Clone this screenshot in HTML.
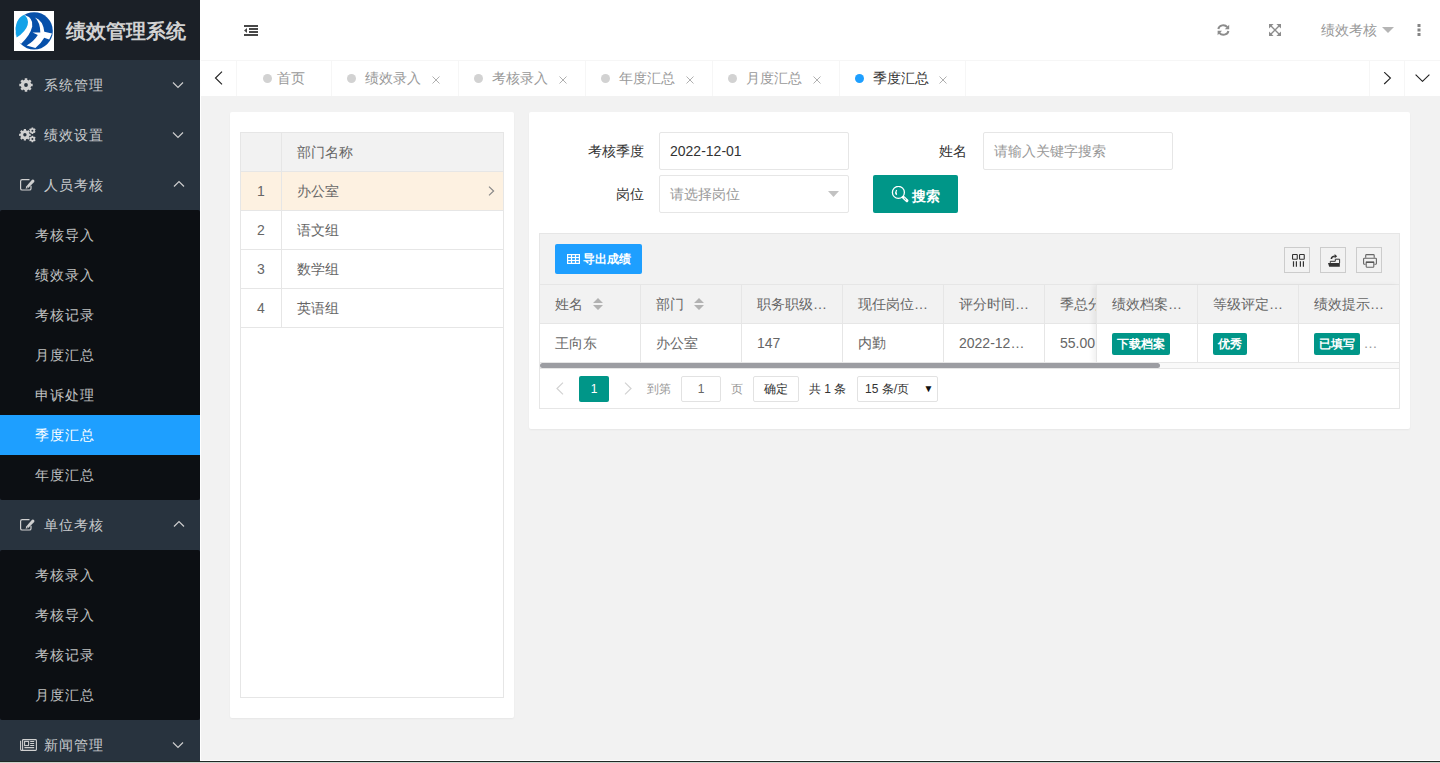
<!DOCTYPE html>
<html><head><meta charset="utf-8">
<style>
*{margin:0;padding:0;box-sizing:border-box}
html,body{width:1440px;height:763px;overflow:hidden;background:#f2f2f2;font-family:"Liberation Sans",sans-serif;font-size:14px;color:#666}
.abs{position:absolute}
#side{position:absolute;left:0;top:0;width:200px;height:763px;background:#28333e;overflow:hidden}
#logo{position:absolute;left:0;top:0;width:200px;height:60px;background:#1b2027}
#logo .title{position:absolute;left:66px;top:17px;font-size:20px;font-weight:bold;color:#d2d2d2;line-height:28px;white-space:nowrap}
.nav{position:absolute;left:0;width:200px;height:50px;color:rgba(255,255,255,.75);line-height:50px}
.nav .t{position:absolute;left:44px;top:0;letter-spacing:1px}
.nav svg.ic{position:absolute;left:20px;top:18px}
.nav svg.ar{position:absolute;left:172px;top:21px}
.child{position:absolute;left:0;width:200px;background:#0c0f13;border-radius:2px}
.ci{position:absolute;left:0;width:200px;height:40px;line-height:40px;color:rgba(255,255,255,.75)}
.ci span{position:absolute;left:35px;letter-spacing:1px}
.ci.on{background:#1e9fff;color:#fff}
#header{position:absolute;left:200px;top:0;width:1240px;height:60px;background:#fff}
#tabs{position:absolute;left:200px;top:60px;width:1240px;height:36px;background:#fff;border-top:1px solid #f6f6f6}
.tab{position:absolute;top:0;height:35px;border-right:1px solid #f6f6f6;color:#999;line-height:35px;white-space:nowrap}
.tab .dot{position:absolute;top:13px;width:9px;height:9px;border-radius:50%;background:#d2d2d2}
.tab .tx{position:absolute;top:0}
.tab .x{position:absolute;top:11px}
.card{position:absolute;background:#fff;border-radius:2px;box-shadow:0 1px 2px 0 rgba(0,0,0,.05)}
.bd{border:1px solid #e6e6e6}
.lt{color:#666;white-space:nowrap}
.inp{border:1px solid #e6e6e6;border-radius:2px;background:#fff;line-height:36px;padding-left:10px;white-space:nowrap}
.tb{width:26px;height:26px;border:1px solid #ccc}
.hd{position:absolute;top:50px;line-height:39px;white-space:nowrap;color:#666}
.cl{position:absolute;top:89px;line-height:38px;white-space:nowrap;color:#666}
.vl{position:absolute;width:1px;background:#e6e6e6}
.btn{position:absolute;height:22px;line-height:22px;background:#009688;color:#fff;font-size:12px;padding:0 5px;border-radius:2px;font-weight:bold;white-space:nowrap}
</style></head><body>
<div id="side">
  <div id="logo">
    <svg class="abs" style="left:14px;top:11px" width="40" height="40" viewBox="0 0 40 40">
      <rect width="40" height="40" fill="#fff"/>
      <circle cx="20.1" cy="19.9" r="18.7" fill="#0650aa"/>
      <path d="M9.6 3.6 Q19.8 7 18.2 15.5 Q16.6 23.5 7.2 32.8 L2.5 30 L1 20 L4 8 Z" fill="#fff"/>
      <path d="M10.2 3.8 Q15.3 8 13.6 14 Q11.8 20.5 2.6 26.6 Q0.6 18 3 11 Q5.4 5.6 10.2 3.8 Z" fill="#12a2e8"/>
      <path d="M21 6.6 Q29 9.5 30.3 20.8 L38 22.6 L35.2 28.4 L30.2 26.8 Q26.8 33 21.4 36.9 L12.6 34.6 Q20.2 30 23.8 24 L18.6 21.4 L26.3 21.4 Q26.2 11.5 21 6.6 Z" fill="#fff"/>
    </svg>
    <div class="title">绩效管理系统</div>
  </div>

  <div class="nav" style="top:60px"><svg class="abs" style="left:0;top:0" width="40" height="50" viewBox="0 0 40 50"><path fill-rule="evenodd" fill="#d0d0d0" d="M24.76 19.85 L24.73 18.32 L27.27 18.32 L27.24 19.85 L28.77 20.48 L29.82 19.38 L31.62 21.18 L30.52 22.23 L31.15 23.76 L32.68 23.73 L32.68 26.27 L31.15 26.24 L30.52 27.77 L31.62 28.82 L29.82 30.62 L28.77 29.52 L27.24 30.15 L27.27 31.68 L24.73 31.68 L24.76 30.15 L23.23 29.52 L22.18 30.62 L20.38 28.82 L21.48 27.77 L20.85 26.24 L19.32 26.27 L19.32 23.73 L20.85 23.76 L21.48 22.23 L20.38 21.18 L22.18 19.38 L23.23 20.48 Z M27.90 25.00 A1.9 1.9 0 1 0 24.10 25.00 A1.9 1.9 0 1 0 27.90 25.00 Z"/></svg><span class="t">系统管理</span><svg class="ar" width="12" height="8" viewBox="0 0 12 8"><path d="M1 1.5 L6 6.5 L11 1.5" fill="none" stroke="#cdcdcd" stroke-width="1.2"/></svg></div>
  <div class="nav" style="top:110px"><svg class="abs" style="left:0;top:0" width="40" height="50" viewBox="0 0 40 50"><g fill-rule="evenodd" fill="#d0d0d0"><path d="M23.83 20.33 L23.79 19.00 L26.01 19.00 L25.97 20.33 L27.30 20.88 L28.22 19.92 L29.78 21.48 L28.82 22.40 L29.37 23.73 L30.70 23.69 L30.70 25.91 L29.37 25.87 L28.82 27.20 L29.78 28.12 L28.22 29.68 L27.30 28.72 L25.97 29.27 L26.01 30.60 L23.79 30.60 L23.83 29.27 L22.50 28.72 L21.58 29.68 L20.02 28.12 L20.98 27.20 L20.43 25.87 L19.10 25.91 L19.10 23.69 L20.43 23.73 L20.98 22.40 L20.02 21.48 L21.58 19.92 L22.50 20.88 Z M26.60 24.80 A1.7 1.7 0 1 0 23.20 24.80 A1.7 1.7 0 1 0 26.60 24.80 Z"/><path d="M31.60 18.23 L31.55 17.41 L33.25 17.41 L33.20 18.23 L34.14 18.77 L34.83 18.32 L35.67 19.79 L34.94 20.16 L34.94 21.24 L35.67 21.61 L34.83 23.08 L34.14 22.63 L33.20 23.17 L33.25 23.99 L31.55 23.99 L31.60 23.17 L30.66 22.63 L29.97 23.08 L29.13 21.61 L29.86 21.24 L29.86 20.16 L29.13 19.79 L29.97 18.32 L30.66 18.77 Z M33.40 20.70 A1.0 1.0 0 1 0 31.40 20.70 A1.0 1.0 0 1 0 33.40 20.70 Z"/><path d="M31.60 26.53 L31.55 25.71 L33.25 25.71 L33.20 26.53 L34.14 27.07 L34.83 26.62 L35.67 28.09 L34.94 28.46 L34.94 29.54 L35.67 29.91 L34.83 31.38 L34.14 30.93 L33.20 31.47 L33.25 32.29 L31.55 32.29 L31.60 31.47 L30.66 30.93 L29.97 31.38 L29.13 29.91 L29.86 29.54 L29.86 28.46 L29.13 28.09 L29.97 26.62 L30.66 27.07 Z M33.40 29.00 A1.0 1.0 0 1 0 31.40 29.00 A1.0 1.0 0 1 0 33.40 29.00 Z"/></g></svg><span class="t">绩效设置</span><svg class="ar" width="12" height="8" viewBox="0 0 12 8"><path d="M1 1.5 L6 6.5 L11 1.5" fill="none" stroke="#cdcdcd" stroke-width="1.2"/></svg></div>
  <div class="nav" style="top:160px"><svg class="abs" style="left:19px;top:18px" width="17" height="14" viewBox="0 0 17 14"><path d="M10.5 1.6 H3.2 Q1.6 1.6 1.6 3.2 V10.4 Q1.6 12 3.2 12 H10.4 Q12 12 12 10.4 V7.8" fill="none" stroke="#d0d0d0" stroke-width="1.2"/><path d="M13 1.8 Q14.2 1.2 15 2 Q15.8 2.8 15.2 4 L9.2 10 L6.6 10.8 L7.4 8.2 Z" fill="#d0d0d0"/><path d="M8.3 8.6 L8 9.8 L9.1 9.4 Z" fill="#28333e"/></svg><span class="t">人员考核</span><svg class="ar" style="left:173px;top:20px" width="12" height="8" viewBox="0 0 12 8"><path d="M1 6.5 L6 1.5 L11 6.5" fill="none" stroke="#cdcdcd" stroke-width="1.2"/></svg></div>
  <div class="child" style="top:210px;height:290px">
    <div class="ci" style="top:5px"><span>考核导入</span></div>
    <div class="ci" style="top:45px"><span>绩效录入</span></div>
    <div class="ci" style="top:85px"><span>考核记录</span></div>
    <div class="ci" style="top:125px"><span>月度汇总</span></div>
    <div class="ci" style="top:165px"><span>申诉处理</span></div>
    <div class="ci on" style="top:205px"><span>季度汇总</span></div>
    <div class="ci" style="top:245px"><span>年度汇总</span></div>
  </div>
  <div class="nav" style="top:500px"><svg class="abs" style="left:19px;top:18px" width="17" height="14" viewBox="0 0 17 14"><path d="M10.5 1.6 H3.2 Q1.6 1.6 1.6 3.2 V10.4 Q1.6 12 3.2 12 H10.4 Q12 12 12 10.4 V7.8" fill="none" stroke="#d0d0d0" stroke-width="1.2"/><path d="M13 1.8 Q14.2 1.2 15 2 Q15.8 2.8 15.2 4 L9.2 10 L6.6 10.8 L7.4 8.2 Z" fill="#d0d0d0"/><path d="M8.3 8.6 L8 9.8 L9.1 9.4 Z" fill="#28333e"/></svg><span class="t">单位考核</span><svg class="ar" style="left:173px;top:20px" width="12" height="8" viewBox="0 0 12 8"><path d="M1 6.5 L6 1.5 L11 6.5" fill="none" stroke="#cdcdcd" stroke-width="1.2"/></svg></div>
  <div class="child" style="top:550px;height:170px">
    <div class="ci" style="top:5px"><span>考核录入</span></div>
    <div class="ci" style="top:45px"><span>考核导入</span></div>
    <div class="ci" style="top:85px"><span>考核记录</span></div>
    <div class="ci" style="top:125px"><span>月度汇总</span></div>
  </div>
  <div class="nav" style="top:720px"><svg class="abs" style="left:19px;top:18px" width="19" height="14" viewBox="0 0 19 14"><g fill="none" stroke="#d0d0d0" stroke-width="1.1"><path d="M3.6 1.6 H16.6 Q17.4 1.6 17.4 2.4 V11.6 Q17.4 12.4 16.6 12.4 H2.4 Q1.6 12.4 1.6 11.6 V2.8"/><path d="M3.6 1.6 V12.4"/><rect x="5.6" y="3.4" width="4" height="4.2"/><path d="M11.2 3.5 H15.2 M11.2 5.5 H15.2 M11.2 7.5 H15.2 M5.4 9.6 H15.2"/></g></svg><span class="t">新闻管理</span><svg class="ar" width="12" height="8" viewBox="0 0 12 8"><path d="M1 1.5 L6 6.5 L11 1.5" fill="none" stroke="#cdcdcd" stroke-width="1.2"/></svg></div>
</div>
<div id="header">
  <svg class="abs" style="left:44px;top:25px" width="15" height="11" viewBox="0 0 15 11"><g fill="#474747"><rect x="0" y="0" width="14" height="2"/><rect x="5" y="3" width="9" height="2"/><rect x="5" y="6" width="9" height="2"/><rect x="0" y="9" width="14" height="2"/><path d="M0 5.5 L3 3 L3 8 Z"/></g></svg>
  <svg class="abs" style="left:1016.5px;top:24px" width="13" height="12" viewBox="0 0 13 12"><g fill="none" stroke="#8c8c8c" stroke-width="2"><path d="M1.3 5 A5 4.6 0 0 1 10.3 3.2"/><path d="M11.4 7 A5 4.6 0 0 1 2.4 8.8"/></g><g fill="#8c8c8c"><path d="M12.2 0.8 V5.2 H7.8 Z"/><path d="M0.6 11.2 V6.8 H5 Z"/></g></svg>
  <svg class="abs" style="left:1069px;top:24px" width="12" height="12" viewBox="0 0 12 12"><g fill="#8c8c8c"><path d="M0 0 H4.6 L0 4.6 Z"/><path d="M12 0 H7.4 L12 4.6 Z"/><path d="M0 12 H4.6 L0 7.4 Z"/><path d="M12 12 H7.4 L12 7.4 Z"/></g><path d="M1.5 1.5 L10.5 10.5 M10.5 1.5 L1.5 10.5" stroke="#8c8c8c" stroke-width="1.4"/></svg>
  <div class="abs" style="left:1121px;top:20px;line-height:20px;color:#999;white-space:nowrap">绩效考核</div>
  <svg class="abs" style="left:1182px;top:27px" width="12" height="6" viewBox="0 0 12 6"><path d="M0 0 H12 L6 6 Z" fill="#b5b5b5"/></svg>
  <svg class="abs" style="left:1216.5px;top:24px" width="4" height="12" viewBox="0 0 4 12"><g fill="#858585"><rect x="0.5" y="0" width="3" height="3"/><rect x="0.5" y="4.5" width="3" height="3"/><rect x="0.5" y="9" width="3" height="3"/></g></svg>
</div>
<div id="tabs">
  <div class="abs" style="left:0;top:0;width:37px;height:35px;border-right:1px solid #f6f6f6"><svg class="abs" style="left:14px;top:10px" width="9" height="14" viewBox="0 0 9 14"><path d="M8 0.7 L1.5 7 L8 13.3" fill="none" stroke="#222" stroke-width="1.15"/></svg></div>
  <div class="tab" style="left:37px;width:95px"><i class="dot" style="left:26px"></i><span class="tx" style="left:40px">首页</span></div>
  <div class="tab" style="left:132px;width:127px"><i class="dot" style="left:15px;"></i><span class="tx" style="left:33px;">绩效录入</span><svg class="x" style="left:100px;top:15px" width="8" height="8" viewBox="0 0 8 8"><path d="M0.5 0.5 L7.5 7.5 M7.5 0.5 L0.5 7.5" stroke="#b0b0b0" stroke-width="1"/></svg></div>
  <div class="tab" style="left:259px;width:127px"><i class="dot" style="left:15px;"></i><span class="tx" style="left:33px;">考核录入</span><svg class="x" style="left:100px;top:15px" width="8" height="8" viewBox="0 0 8 8"><path d="M0.5 0.5 L7.5 7.5 M7.5 0.5 L0.5 7.5" stroke="#b0b0b0" stroke-width="1"/></svg></div>
  <div class="tab" style="left:386px;width:127px"><i class="dot" style="left:15px;"></i><span class="tx" style="left:33px;">年度汇总</span><svg class="x" style="left:100px;top:15px" width="8" height="8" viewBox="0 0 8 8"><path d="M0.5 0.5 L7.5 7.5 M7.5 0.5 L0.5 7.5" stroke="#b0b0b0" stroke-width="1"/></svg></div>
  <div class="tab" style="left:513px;width:127px"><i class="dot" style="left:15px;"></i><span class="tx" style="left:33px;">月度汇总</span><svg class="x" style="left:100px;top:15px" width="8" height="8" viewBox="0 0 8 8"><path d="M0.5 0.5 L7.5 7.5 M7.5 0.5 L0.5 7.5" stroke="#b0b0b0" stroke-width="1"/></svg></div>
  <div class="tab" style="left:640px;width:126px"><i class="dot" style="left:15px;background:#1e9fff"></i><span class="tx" style="left:33px;color:#333">季度汇总</span><svg class="x" style="left:99px;top:15px" width="8" height="8" viewBox="0 0 8 8"><path d="M0.5 0.5 L7.5 7.5 M7.5 0.5 L0.5 7.5" stroke="#b0b0b0" stroke-width="1"/></svg></div>
  <div class="abs" style="left:1169px;top:0;width:36px;height:35px;border-left:1px solid #f6f6f6"><svg class="abs" style="left:13px;top:11px" width="9" height="13" viewBox="0 0 9 13"><path d="M1.2 0.2 L7.4 6.1 L1.2 12" fill="none" stroke="#222" stroke-width="1.15"/></svg></div>
  <div class="abs" style="left:1204px;top:0;width:36px;height:35px;border-left:1px solid #f6f6f6"><svg class="abs" style="left:10px;top:13px" width="15" height="8" viewBox="0 0 15 8"><path d="M0.6 0.6 L7.5 7.3 L14.4 0.6" fill="none" stroke="#222" stroke-width="1.15"/></svg></div>
</div>

<!-- left card -->
<div class="card" style="left:230px;top:112px;width:284px;height:606px">
  <div class="abs" style="left:10px;top:20px;width:264px;height:566px;border:1px solid #e6e6e6;background:#fff">
    <div class="abs" style="left:0;top:0;width:262px;height:39px;background:#f2f2f2;border-bottom:1px solid #e6e6e6"></div>
    <div class="abs" style="left:40px;top:0;width:1px;height:195px;background:#e6e6e6"></div>
    <div class="abs lt" style="left:56px;top:0;line-height:38px">部门名称</div>
    <div class="abs" style="left:0;top:39px;width:262px;height:39px;background:#fdf1e1;border-bottom:1px solid #e6e6e6"></div>
    <div class="abs" style="left:40px;top:39px;width:1px;height:39px;background:#e6e6e6"></div>
    <div class="abs lt" style="left:56px;top:39px;line-height:38px">办公室</div>
    <div class="abs lt" style="left:16px;top:39px;line-height:38px">1</div>
    <svg class="abs" style="left:246.5px;top:53px" width="7" height="10" viewBox="0 0 7 10"><path d="M1 0.6 L5.6 5 L1 9.4" fill="none" stroke="#888" stroke-width="1.2"/></svg>
    <div class="abs" style="left:0;top:78px;width:262px;height:39px;border-bottom:1px solid #e6e6e6"></div>
    <div class="abs lt" style="left:56px;top:78px;line-height:38px">语文组</div>
    <div class="abs lt" style="left:16px;top:78px;line-height:38px">2</div>
    <div class="abs" style="left:0;top:117px;width:262px;height:39px;border-bottom:1px solid #e6e6e6"></div>
    <div class="abs lt" style="left:56px;top:117px;line-height:38px">数学组</div>
    <div class="abs lt" style="left:16px;top:117px;line-height:38px">3</div>
    <div class="abs" style="left:0;top:156px;width:262px;height:39px;border-bottom:1px solid #e6e6e6"></div>
    <div class="abs lt" style="left:56px;top:156px;line-height:38px">英语组</div>
    <div class="abs lt" style="left:16px;top:156px;line-height:38px">4</div>
  </div>
</div>

<!-- right card -->
<div class="card" style="left:529px;top:112px;width:881px;height:317px">
  <div class="abs" style="left:59px;top:20px;line-height:38px;color:#333">考核季度</div>
  <div class="abs inp" style="left:130px;top:20px;width:190px;height:38px;color:#333">2022-12-01</div>
  <div class="abs" style="left:87px;top:63px;line-height:38px;color:#333">岗位</div>
  <div class="abs inp" style="left:130px;top:63px;width:190px;height:38px;color:#999">请选择岗位</div>
  <svg class="abs" style="left:299px;top:79px" width="11" height="6" viewBox="0 0 11 6"><path d="M0 0 H11 L5.5 6 Z" fill="#c2c2c2"/></svg>
  <div class="abs" style="left:410px;top:20px;line-height:38px;color:#333">姓名</div>
  <div class="abs inp" style="left:454px;top:20px;width:190px;height:38px;color:#999">请输入关键字搜索</div>
  <div class="abs" style="left:344px;top:63px;width:85px;height:38px;background:#009688;border-radius:2px"></div>
  <svg class="abs" style="left:362px;top:74px" width="18" height="18" viewBox="0 0 18 18"><circle cx="7.4" cy="6.4" r="6" fill="none" stroke="#fff" stroke-width="1.3"/><path d="M12.4 11.3 L15.9 14.6" stroke="#fff" stroke-width="3" stroke-linecap="round"/><path d="M13.3 12.1 L15.1 13.8" stroke="#009688" stroke-width="0.8"/><path d="M5.6 4 Q4 6.4 5.6 8.9" fill="none" stroke="#fff" stroke-width="1.3"/></svg>
  <div class="abs" style="left:383px;top:74px;line-height:20px;color:#fff;font-weight:bold">搜索</div>

  <!-- table box -->
  <div class="abs" style="left:10px;top:121px;width:861px;height:176px;border:1px solid #e6e6e6;background:#fff;overflow:hidden">
    <div class="abs" style="left:0;top:0;width:859px;height:51px;background:#f2f2f2;border-bottom:1px solid #e6e6e6"></div>
    <div class="abs" style="left:15px;top:10px;width:87px;height:30px;background:#1e9fff;border-radius:2px"></div>
    <svg class="abs" style="left:26.5px;top:20px" width="13" height="10" viewBox="0 0 13 10"><g fill="none" stroke="#fff" stroke-width="1.2"><rect x="0.6" y="0.6" width="11.8" height="8.8"/><line x1="4.5" y1="0" x2="4.5" y2="10"/><line x1="8.5" y1="0" x2="8.5" y2="10"/><line x1="0" y1="3.5" x2="13" y2="3.5"/><line x1="0" y1="6.5" x2="13" y2="6.5"/></g></svg>
    <div class="abs" style="left:43px;top:18px;line-height:14px;font-size:12px;color:#fff;font-weight:bold">导出成绩</div>
    <div class="abs tb" style="left:744px;top:13px"><svg width="24" height="24" viewBox="0 0 24 24" style="position:absolute;left:0;top:0"><g fill="none" stroke="#333" stroke-width="1.1"><rect x="7.55" y="6.55" width="4.7" height="4.7" rx="0.5"/><rect x="14.55" y="6.55" width="4.7" height="4.7" rx="0.5"/><path d="M8.5 13.2 V18.8 M11.4 13.2 V18.8 M15.4 13.2 V18.8 M18.4 13.2 V18.8" stroke-width="1.2"/></g></svg></div>
    <div class="abs tb" style="left:780px;top:13px"><svg width="24" height="24" viewBox="0 0 24 24" style="position:absolute;left:0;top:0"><path d="M9.3 14.9 V13.3 H14.3 V11.2 H18.6 V15" fill="none" stroke="#333" stroke-width="1"/><path d="M7 15 H18.8 V18.8 H8.2 Z" fill="#333"/><path d="M10.3 11 Q10.5 8.4 13.8 8.2" fill="none" stroke="#333" stroke-width="1.5"/><path d="M13.6 6.1 L16.2 8.2 L13.6 10.3 Z" fill="#333"/></svg></div>
    <div class="abs tb" style="left:816px;top:13px"><svg width="24" height="24" viewBox="0 0 24 24" style="position:absolute;left:0;top:0"><g fill="none" stroke="#666" stroke-width="1.1"><path d="M8.7 9.8 V7.5 Q8.7 6.6 9.6 6.6 H16.3 Q17.2 6.6 17.2 7.5 V9.8"/><path d="M8.6 16.2 H7.4 Q6.6 16.2 6.6 15.4 V11 Q6.6 10.2 7.4 10.2 H18.6 Q19.4 10.2 19.4 11 V15.4 Q19.4 16.2 18.6 16.2 H17.4"/><path d="M9.2 14.4 H16.8 V18.4 Q16.8 19.3 15.9 19.3 H10.1 Q9.2 19.3 9.2 18.4 Z"/></g><path d="M9 14.2 H17" stroke="#555" stroke-width="1.4"/></svg></div>

    <!-- header row -->
<div class="abs" style="left:0;top:51px;width:859px;height:39px;background:#f2f2f2;border-bottom:1px solid #e6e6e6"></div>
<div class="abs" style="left:0;top:90px;width:859px;height:39px;background:#fff;border-bottom:1px solid #e6e6e6"></div>
<div class="vl" style="left:100px;top:51px;height:78px"></div>
<div class="vl" style="left:201px;top:51px;height:78px"></div>
<div class="vl" style="left:302px;top:51px;height:78px"></div>
<div class="vl" style="left:403px;top:51px;height:78px"></div>
<div class="vl" style="left:504px;top:51px;height:78px"></div>
<div class="hd" style="left:15px;top:51px;line-height:38px">姓名</div>
<div class="hd" style="left:116px;top:51px;line-height:38px">部门</div>
<div class="hd" style="left:217px;top:51px;line-height:38px">职务职级…</div>
<div class="hd" style="left:318px;top:51px;line-height:38px">现任岗位…</div>
<div class="hd" style="left:419px;top:51px;line-height:38px">评分时间…</div>
<div class="hd" style="left:520px;top:51px;line-height:38px">季总分</div>
<svg class="abs" style="left:53px;top:64px" width="10" height="12" viewBox="0 0 10 12"><path d="M0 5 L5 0 L10 5 Z M0 7 L5 12 L10 7 Z" fill="#b2b2b2"/></svg><svg class="abs" style="left:154px;top:64px" width="10" height="12" viewBox="0 0 10 12"><path d="M0 5 L5 0 L10 5 Z M0 7 L5 12 L10 7 Z" fill="#b2b2b2"/></svg><div class="cl" style="left:15px;top:90px;line-height:38px">王向东</div>
<div class="cl" style="left:116px;top:90px;line-height:38px">办公室</div>
<div class="cl" style="left:217px;top:90px;line-height:38px">147</div>
<div class="cl" style="left:318px;top:90px;line-height:38px">内勤</div>
<div class="cl" style="left:419px;top:90px;line-height:38px">2022-12…</div>
<div class="cl" style="left:520px;top:90px;line-height:38px">55.00</div>
<div class="abs" style="left:556px;top:51px;width:303px;height:78px;background:#fff;box-shadow:-3px 0 5px rgba(0,0,0,.06)"><div class="abs" style="left:0;top:0;width:303px;height:39px;background:#f2f2f2;border-bottom:1px solid #e6e6e6"></div><div class="abs" style="left:0;top:39px;width:303px;height:39px;background:#fff;border-bottom:1px solid #e6e6e6"></div><div class="vl" style="left:0px;top:0;height:78px"></div><div class="vl" style="left:101px;top:0;height:78px"></div><div class="vl" style="left:202px;top:0;height:78px"></div><div class="hd" style="left:16px;top:0;line-height:38px">绩效档案…</div><div class="hd" style="left:117px;top:0;line-height:38px">等级评定…</div><div class="hd" style="left:218px;top:0;line-height:38px">绩效提示…</div><div class="btn" style="left:16px;top:48px;width:58px;text-align:center;padding:0">下载档案</div><div class="btn" style="left:117px;top:48px;width:34px;text-align:center;padding:0">优秀</div><div class="btn" style="left:218px;top:48px;width:46px;text-align:center;padding:0">已填写</div><div class="abs" style="left:267.5px;top:39px;line-height:38px;color:#999">…</div></div>
<div class="abs" style="left:0;top:128px;width:859px;height:7px;background:#f9f9f9;border-top:1px solid #e6e6e6;border-bottom:1px solid #e6e6e6"></div>
<div class="abs" style="left:0;top:129px;width:620px;height:5px;background:#9c9da2;border-radius:3px"></div>
<svg class="abs" style="left:16px;top:148px" width="8" height="13" viewBox="0 0 8 13"><path d="M7 0.6 L1 6.5 L7 12.4" fill="none" stroke="#d2d2d2" stroke-width="1.2"/></svg>
<div class="abs" style="left:39px;top:142px;width:30px;height:26px;background:#009688;border-radius:2px;color:#fff;text-align:center;line-height:26px;font-size:12px">1</div>
<svg class="abs" style="left:84px;top:148px" width="8" height="13" viewBox="0 0 8 13"><path d="M1 0.6 L7 6.5 L1 12.4" fill="none" stroke="#d2d2d2" stroke-width="1.2"/></svg>
<div class="abs" style="left:107px;top:142px;line-height:26px;font-size:12px;color:#999">到第</div>
<div class="abs" style="left:141px;top:142px;width:40px;height:26px;border:1px solid #e2e2e2;border-radius:2px;text-align:center;line-height:24px;font-size:12px;color:#666">1</div>
<div class="abs" style="left:191px;top:142px;line-height:26px;font-size:12px;color:#999">页</div>
<div class="abs" style="left:213px;top:142px;width:46px;height:26px;border:1px solid #e2e2e2;border-radius:2px;text-align:center;line-height:24px;font-size:12px;color:#333">确定</div>
<div class="abs" style="left:269px;top:142px;line-height:26px;font-size:12px;color:#333;white-space:nowrap">共 1 条</div>
<div class="abs" style="left:317px;top:142px;width:81px;height:26px;border:1px solid #e2e2e2;border-radius:2px;line-height:24px;font-size:12px;color:#333;padding-left:7px;white-space:nowrap">15 条/页</div>
<div class="abs" style="left:383.5px;top:142px;line-height:26px;font-size:10px;color:#111">▼</div>
  </div>
</div>

<div class="abs" style="left:200px;top:60px;width:1px;height:701px;background:#fff"></div>
<div class="abs" style="left:200px;top:760px;width:1240px;height:1px;background:#fff"></div>
<div class="abs" style="left:0;top:761px;width:1440px;height:1px;background:#1f2925"></div>
<div class="abs" style="left:0;top:762px;width:1440px;height:1px;background:#cdd4cd"></div>
</body></html>
